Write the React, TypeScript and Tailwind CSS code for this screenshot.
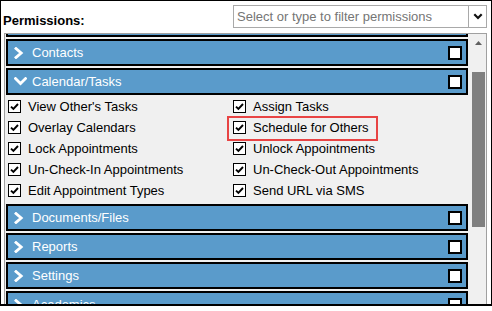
import React from "react";

const FONT = { fontFamily: '"Liberation Sans", Arial, sans-serif' };

function ChevronRight() {
  return (
    <svg width="10" height="12" viewBox="0 0 10 12" className="block">
      <path d="M2 1.5 L7.2 6 L2 10.5" stroke="white" strokeWidth="2.8" fill="none" strokeLinecap="square" strokeLinejoin="miter" />
    </svg>
  );
}

function ChevronDown() {
  return (
    <svg width="13" height="9" viewBox="0 0 13 9" className="block">
      <path d="M1.5 1.6 L6.5 6.6 L11.5 1.6" stroke="white" strokeWidth="2.8" fill="none" strokeLinecap="square" strokeLinejoin="miter" />
    </svg>
  );
}

function Check() {
  return (
    <span className="flex h-[13px] w-[13px] shrink-0 items-center justify-center border border-black bg-white">
      <svg width="11" height="11" viewBox="0 0 11 11" className="block">
        <path d="M2 5.6 L4.4 8 L9 3" stroke="black" strokeWidth="1.9" fill="none" />
      </svg>
    </span>
  );
}

function Header({ label, open, className = "" }: { label: string; open?: boolean; className?: string }) {
  return (
    <div className={`mx-[1px] flex h-[27px] shrink-0 items-center border-2 border-black bg-[#5a9bcb] pl-[6px] pr-[4px] ${className}`}>
      <span className="flex w-[18px] items-center">{open ? <ChevronDown /> : <ChevronRight />}</span>
      <span className="flex-1 text-[13px] leading-[15px] text-white">{label}</span>
      <span className="h-[14px] w-[14px] border-2 border-black bg-white" />
    </div>
  );
}

function Item({ label, highlight }: { label: string; highlight?: boolean }) {
  return (
    <div className="relative flex h-[21px] items-center">
      <Check />
      <span className="ml-[7px] whitespace-nowrap text-[13px] leading-[15px] text-black">{label}</span>
      {highlight && (
        <span className="absolute left-[-6px] top-[-1px] h-[25px] w-[151px] border-2 border-[#e84444]" />
      )}
    </div>
  );
}

export default function App() {
  const left = ["View Other's Tasks", "Overlay Calendars", "Lock Appointments", "Un-Check-In Appointments", "Edit Appointment Types"];
  const right = ["Assign Tasks", "Schedule for Others", "Unlock Appointments", "Un-Check-Out Appointments", "Send URL via SMS"];
  return (
    <div className="h-[311px] w-[492px] bg-white" style={FONT}>
      <div className="flex h-[306px] flex-col overflow-hidden border border-b-2 border-black">
        <div className="flex h-[27px] shrink-0 items-end justify-between pl-[2px] pr-[4px]">
          <span className="text-[13px] font-bold leading-[15px] text-black">Permissions:</span>
          <div className="flex h-[23px] w-[254px] items-center border border-[#a9a9a9] bg-white">
            <span className="flex-1 whitespace-nowrap pl-[3px] text-[13px] leading-[15px] text-[#757575]">
              Select or type to filter permissions
            </span>
            <span className="flex h-full w-[18px] items-center justify-center border-l border-[#a9a9a9]">
              <svg width="10" height="7" viewBox="0 0 10 7" className="block">
                <path d="M1.3 1.3 L5 5 L8.7 1.3" stroke="#111" strokeWidth="2.2" fill="none" />
              </svg>
            </span>
          </div>
        </div>
        <div className="ml-[3px] mr-[4px] mt-[5px] flex min-h-0 flex-1 overflow-hidden border-l border-r border-t border-[#a0a0a0] bg-[#f0f0f0]">
          <div className="flex min-w-0 flex-1 flex-col gap-[2px] overflow-hidden">
            <Header label="" className="mt-[-24px]" />
            <Header label="Contacts" />
            <div className="flex flex-col">
              <Header label="Calendar/Tasks" open />
              <div className="mx-[1px] grid grid-cols-[225px_1fr] py-[1px] pl-[2px]">
                <div className="flex flex-col">
                  {left.map((l) => (
                    <Item key={l} label={l} />
                  ))}
                </div>
                <div className="flex flex-col">
                  {right.map((l) => (
                    <Item key={l} label={l} highlight={l === "Schedule for Others"} />
                  ))}
                </div>
              </div>
            </div>
            <Header label="Documents/Files" />
            <Header label="Reports" />
            <Header label="Settings" />
            <Header label="Academics" />
          </div>
          <div className="flex w-[17px] shrink-0 flex-col">
            <svg width="7" height="4" viewBox="0 0 7 4" className="ml-[6px] mt-[7px] block">
              <path d="M0 4 L3.5 0 L7 4 Z" fill="#606060" />
            </svg>
            <div className="ml-[3px] mt-[27px] h-[155px] w-[13px] bg-[#808080]" />
          </div>
        </div>
      </div>
    </div>
  );
}
